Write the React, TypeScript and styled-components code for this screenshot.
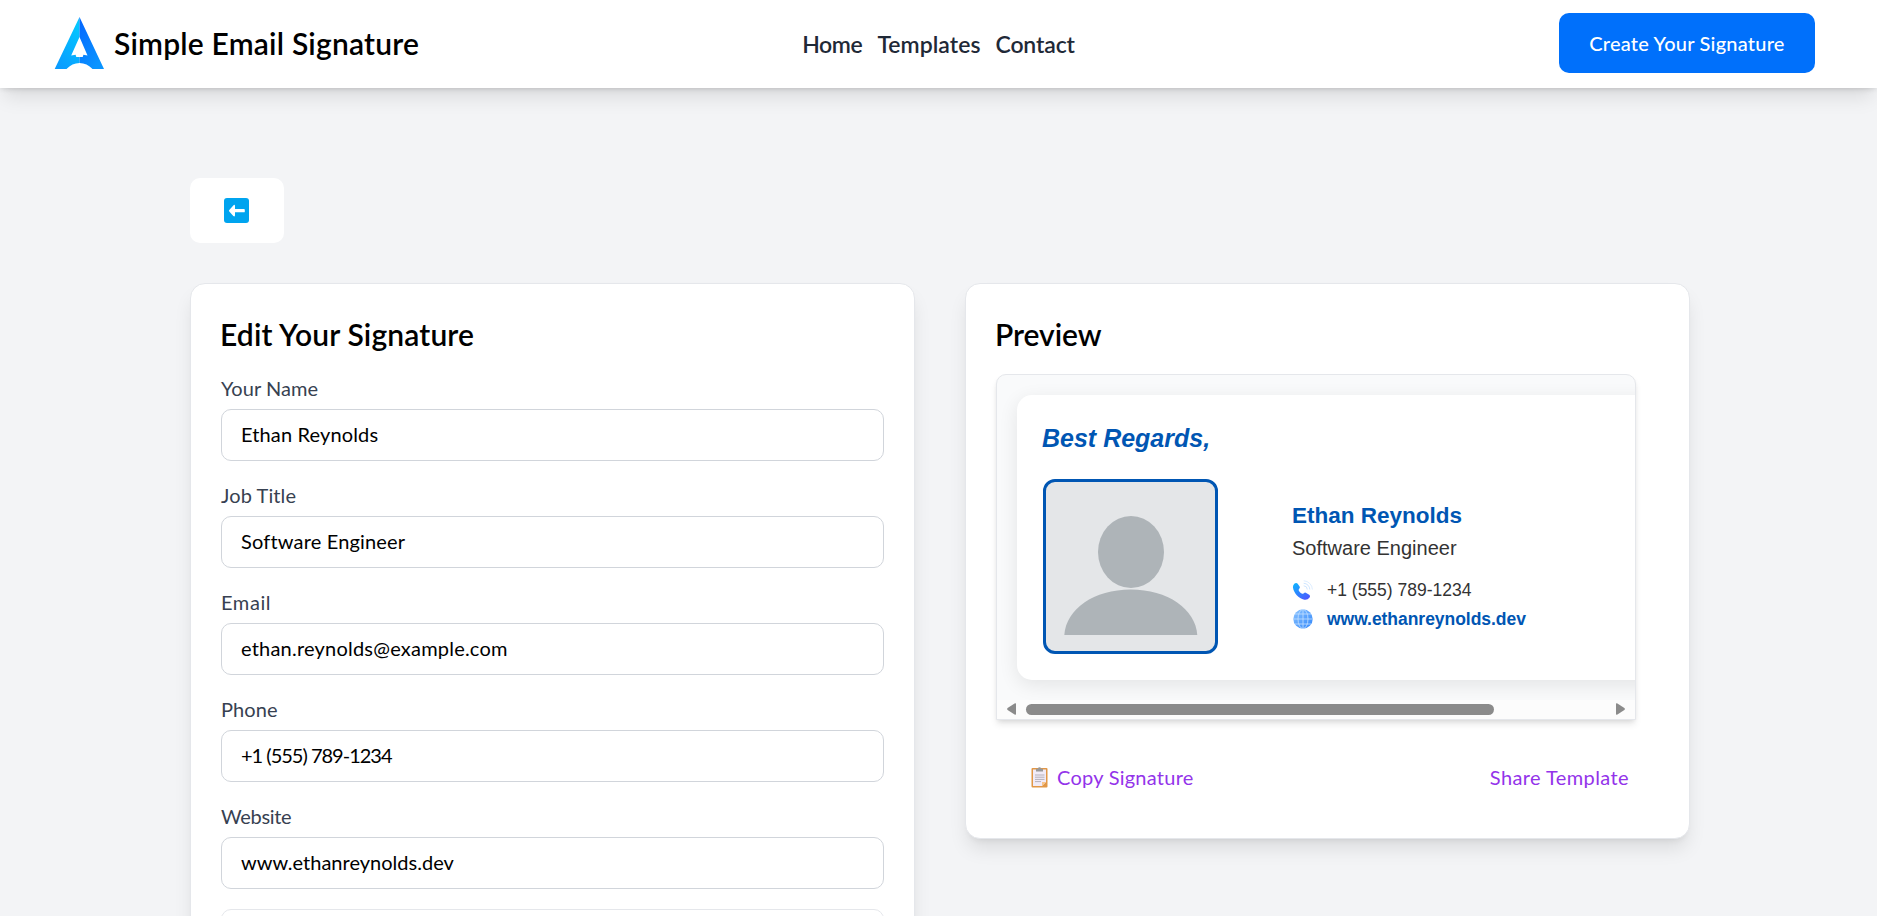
import React from 'react';
import styled, { createGlobalStyle } from 'styled-components';

const GlobalStyle = createGlobalStyle`
  *, *::before, *::after { box-sizing: border-box; }
  html, body { margin: 0; height: 916px; overflow: hidden; }
  body {
    background: #f3f4f6;
    color: #000;
    font-family: Lato, "Liberation Sans", sans-serif;
    font-size: 20px;
  }
`;

const Page = styled.div`
  height: 916px;
  overflow: hidden;
`;

const Header = styled.header`
  position: relative;
  display: grid;
  grid-template-columns: 1fr auto 1fr;
  align-items: center;
  height: 88px;
  padding: 0 62px 2px;
  background: #fff;
  box-shadow: 0 12.5px 18.75px -3.75px rgba(0, 0, 0, 0.1), 0 5px 7.5px -5px rgba(0, 0, 0, 0.1),
    0 1px 5px rgba(0, 0, 0, 0.08);
`;

const Brand = styled.a`
  display: flex;
  align-items: center;
  gap: 9px;
  margin-left: -8px;
  font-size: 30px;
  font-weight: 600;
  letter-spacing: 0.2px;
  line-height: 40px;
`;

const Nav = styled.nav`
  display: flex;
  gap: 15px;
  padding-top: 2px;
`;

const NavLink = styled.a<{ $tracking: number }>`
  color: #1f2937;
  font-size: 23px;
  font-weight: 600;
  line-height: 30px;
  letter-spacing: ${(p) => p.$tracking}px;
`;

const PrimaryButton = styled.button`
  justify-self: end;
  width: 256px;
  height: 60px;
  padding: 0;
  border: 0;
  border-radius: 10px;
  background: #0070fb;
  color: #fff;
  font: 500 20px Lato, sans-serif;
  letter-spacing: 0.22px;
`;

const Main = styled.main`
  padding: 90px 0 0 190px;
`;

const BackButton = styled.button`
  display: flex;
  align-items: center;
  justify-content: center;
  width: 94px;
  height: 65px;
  padding: 0 1px 1px 0;
  border: 0;
  border-radius: 10px;
  background: #fff;
`;

const Columns = styled.div`
  display: grid;
  grid-template-columns: 725px 725px;
  gap: 50px;
  align-items: start;
  margin-top: 40px;
`;

const Card = styled.section`
  padding: 30px;
  border: 1px solid #e5e7eb;
  border-radius: 15px;
  background: #fff;
  box-shadow: 0 12.5px 18.75px -3.75px rgba(0, 0, 0, 0.1), 0 5px 7.5px -5px rgba(0, 0, 0, 0.1);
`;

const CardTitle = styled.h2<{ $tracking?: number }>`
  margin: 0 0 20px;
  margin-left: -1px;
  font-size: 30px;
  font-weight: 600;
  line-height: 40px;
  letter-spacing: ${(p) => p.$tracking ?? 0}px;
`;

const Field = styled.div`
  margin-bottom: 20px;
`;

const Label = styled.label<{ $tracking: number }>`
  display: block;
  padding-bottom: 7px;
  color: #374151;
  line-height: 28px;
  letter-spacing: ${(p) => p.$tracking}px;
`;

const Input = styled.input<{ $tracking: number }>`
  display: block;
  width: 663px;
  height: 52px;
  padding: 0 19px 2px;
  border: 1px solid #d1d5db;
  border-radius: 10px;
  background: #fff;
  color: #000;
  font: 400 20px Lato, sans-serif;
  letter-spacing: ${(p) => p.$tracking}px;
  outline: 0;
`;

const Uploader = styled.div`
  width: 663px;
  height: 120px;
  border: 1px solid #e5e7eb;
  border-radius: 10px;
`;

const PreviewFrame = styled.div`
  width: 640px;
  height: 346px;
  border: 1px solid #e5e7eb;
  border-radius: 10px 10px 0 0;
  background: #f9fafb;
  box-shadow: 0 5px 7.5px -1.25px rgba(0, 0, 0, 0.1), 0 2.5px 5px -2.5px rgba(0, 0, 0, 0.1);
`;

const Viewport = styled.div`
  height: 325px;
  padding: 20px;
  overflow: hidden;
  border-radius: 9px 9px 0 0;
`;

const SignatureCard = styled.div`
  width: 780px;
  height: 285px;
  padding: 26px 25px 25px;
  border-radius: 15px;
  background: #fff;
  box-shadow: 0 5px 19px rgba(0, 0, 0, 0.09);
  font-family: "Liberation Sans", Arial, sans-serif;
`;

const Closing = styled.div`
  margin-bottom: 23px;
  color: #0056b3;
  font-size: 25px;
  font-style: italic;
  font-weight: 700;
  line-height: 35px;
`;

const SignatureBody = styled.div`
  display: flex;
  gap: 74px;
  padding-left: 1px;
`;

const Avatar = styled.div`
  width: 175px;
  height: 175px;
  overflow: hidden;
  border: 3px solid #0056b3;
  border-radius: 12px;
  background: #e4e6e8;

  svg { display: block; }
`;

const Details = styled.div`
  padding-top: 22px;
`;

const PersonName = styled.div`
  margin-bottom: 2px;
  color: #0056b3;
  font-size: 22.5px;
  font-weight: 700;
  line-height: 30px;
`;

const PersonRole = styled.div`
  margin-bottom: 12px;
  color: #333;
  line-height: 30px;
`;

const ContactRow = styled.div<{ $link?: boolean }>`
  display: flex;
  align-items: center;
  gap: 14px;
  height: 29px;
  color: ${(p) => (p.$link ? '#0056b3' : '#333')};
  font-size: 17.5px;
  font-weight: ${(p) => (p.$link ? 700 : 400)};
  letter-spacing: ${(p) => (p.$link ? -0.04 : 0)}px;

  span { padding-top: 2px; }
`;

const Scrollbar = styled.div`
  display: flex;
  align-items: center;
  height: 19px;
  padding: 0 10px 1px;
  background: #fcfcfc;
`;

const ScrollTrack = styled.div`
  flex: 1;
  margin: 0 10px;
`;

const ScrollThumb = styled.div`
  width: 468px;
  height: 11px;
  border-radius: 6px;
  background: #8b8b8b;
`;

const Actions = styled.div`
  display: flex;
  justify-content: space-between;
  width: 640px;
  margin-top: 32px;
  padding: 10px 7px 16px 35px;
`;

const ActionButton = styled.button<{ $tracking: number }>`
  display: flex;
  align-items: center;
  gap: 9px;
  padding: 0;
  border: 0;
  background: none;
  color: #9333ea;
  font: 400 20px/30px Lato, sans-serif;
  letter-spacing: ${(p) => p.$tracking}px;
`;

const LogoMark = () => (
  <svg width="51" height="52" viewBox="0 0 51 52">
    <defs>
      <linearGradient id="logo-left-fill" x1="0.7" y1="0" x2="0.2" y2="1">
        <stop offset="0" stopColor="#04c8ff" />
        <stop offset="1" stopColor="#0a9bff" />
      </linearGradient>
      <linearGradient id="logo-right-fill" x1="0" y1="0" x2="0.6" y2="1">
        <stop offset="0" stopColor="#0464ff" />
        <stop offset="1" stopColor="#0a94ff" />
      </linearGradient>
    </defs>
    <path d="M25.500 0 0.700 52H12.500Q18 46 25.500 46V20Z" fill="url(#logo-left-fill)" />
    <path d="M25.500 0 50 52H38.500Q33 46 25.500 46V20Z" fill="url(#logo-right-fill)" />
    <path d="M25.500 20 17.200 38.500 21.600 37.800 22.300 40H28.700L29.400 37.800 33.500 38.500Z" fill="#fff" />
  </svg>
);

const BackIcon = () => (
  <svg width="25" height="25" viewBox="0 0 25 25">
    <rect width="25" height="25" rx="3" fill="#00a4ef" />
    <path d="M5.300 12 9.300 7.400Q11 6 11 8.200V11.100H20Q20.800 11.100 20.800 12V13.400Q20.800 14.300 20 14.300H11V17Q11 19.200 9.300 17.900L5.300 13.600Q4.500 12.800 5.300 12Z" fill="#fff" />
  </svg>
);

const PersonSilhouette = () => (
  <svg width="169" height="169" viewBox="0 0 169 169">
    <ellipse cx="85" cy="70" rx="33" ry="36" fill="#aeb4b8" />
    <path d="M18.300 153C20 127 48 107.500 84.800 107.500S149.500 127 151.300 153Z" fill="#aeb4b8" />
  </svg>
);

const PhoneIcon = () => (
  <svg width="21" height="20" viewBox="0 0 21 20">
    <defs>
      <linearGradient id="handset-fill" x1="0" y1="0" x2="0.7" y2="1">
        <stop offset="0" stopColor="#0bb8ff" />
        <stop offset="1" stopColor="#4a5cff" />
      </linearGradient>
    </defs>
    <path d="M2.300 3.800Q4.200 2.300 5.700 3.800L7.600 6.400Q8.300 7.500 7.200 8.800Q6.300 9.900 7 11Q8 12.800 9.600 13.600Q10.800 14.200 11.800 13.200Q13 12.200 14.200 12.900L17.200 14.800Q18.600 15.900 17.600 17.500Q15.500 20.300 12.300 19.700C6.500 18.500 1.800 12.800 1 7.800Q.7 5.300 2.300 3.800Z" fill="url(#handset-fill)" />
    <g fill="none" stroke="#cfe6ff" strokeWidth="1">
      <path d="M11.700 0.800A9 9 0 0 1 20.400 9.500" strokeOpacity="0.700" />
      <path d="M11.700 3.300A6.300 6.300 0 0 1 17.800 9.500" />
      <path d="M11.700 5.800A3.800 3.800 0 0 1 15.300 9.500" />
    </g>
  </svg>
);

const GlobeIcon = () => (
  <svg width="21" height="20" viewBox="0 0 21 20">
    <defs>
      <linearGradient id="globe-fill" x1="0" y1="0" x2="1" y2="1">
        <stop offset="0" stopColor="#8cc4ff" />
        <stop offset="1" stopColor="#2f86fb" />
      </linearGradient>
    </defs>
    <circle cx="11" cy="10" r="9.700" fill="url(#globe-fill)" />
    <g fill="none" stroke="#c3e0ff" strokeWidth="0.800">
      <path d="M11 .3V19.700M1.300 10H20.700M2.900 5H19.100M2.900 15H19.100" />
      <ellipse cx="11" cy="10" rx="5" ry="9.600" />
    </g>
  </svg>
);

const ClipboardIcon = () => (
  <svg width="17" height="21" viewBox="0 0 17 21">
    <rect x="0.500" y="1" width="16" height="19.500" rx="1" fill="#e19747" />
    <path d="M2 2.500H15V15L11 19H2Z" fill="#f1ebf7" />
    <path d="M15 15 11 19V15Z" fill="#f7c48a" />
    <path d="M5 1.700H7Q7 0.300 8.500 0.300T10 1.700H12V4.500H5Z" fill="#999" />
    <path d="M4 8H13.500M4 10.200H13.500M4 12.400H13.500M4 14.600H10" stroke="#b5b1ba" strokeWidth="1" />
  </svg>
);

const ArrowLeft = () => (
  <svg width="9" height="12" viewBox="0 0 9 12">
    <path d="M8 .3Q9 0 9 1V11Q9 12 8 11.700L.6 7Q-.4 6 .6 5Z" fill="#8b8b8b" />
  </svg>
);

const ArrowRight = () => (
  <svg width="9" height="12" viewBox="0 0 9 12">
    <path d="M1 .3Q0 0 0 1V11Q0 12 1 11.700L8.400 7Q9.400 6 8.400 5Z" fill="#8b8b8b" />
  </svg>
);

const navItems = [
  { label: 'Home', tracking: -0.4 },
  { label: 'Templates', tracking: 0.04 },
  { label: 'Contact', tracking: -0.15 },
];

const fields = [
  { id: 'name', label: 'Your Name', labelTracking: 0.06, value: 'Ethan Reynolds', tracking: 0.14 },
  { id: 'title', label: 'Job Title', labelTracking: 0.1, value: 'Software Engineer', tracking: 0.17 },
  { id: 'email', label: 'Email', labelTracking: 0.6, value: 'ethan.reynolds@example.com', tracking: 0.215 },
  { id: 'phone', label: 'Phone', labelTracking: 0.1, value: '+1 (555) 789-1234', tracking: -1 },
  { id: 'website', label: 'Website', labelTracking: -0.3, value: 'www.ethanreynolds.dev', tracking: 0.02 },
];

export default function App() {
  return (
    <Page>
      <GlobalStyle />
      <Header>
        <Brand>
          <LogoMark />
          Simple Email Signature
        </Brand>
        <Nav>
          {navItems.map((item) => (
            <NavLink key={item.label} $tracking={item.tracking}>{item.label}</NavLink>
          ))}
        </Nav>
        <PrimaryButton>Create Your Signature</PrimaryButton>
      </Header>
      <Main>
        <BackButton aria-label="Back"><BackIcon /></BackButton>
        <Columns>
          <Card>
            <CardTitle $tracking={0.15}>Edit Your Signature</CardTitle>
            {fields.map((f) => (
              <Field key={f.id}>
                <Label htmlFor={f.id} $tracking={f.labelTracking}>{f.label}</Label>
                <Input id={f.id} defaultValue={f.value} $tracking={f.tracking} />
              </Field>
            ))}
            <Uploader />
          </Card>
          <Card>
            <CardTitle $tracking={-0.05}>Preview</CardTitle>
            <PreviewFrame>
              <Viewport>
                <SignatureCard>
                  <Closing>Best Regards,</Closing>
                  <SignatureBody>
                    <Avatar><PersonSilhouette /></Avatar>
                    <Details>
                      <PersonName>Ethan Reynolds</PersonName>
                      <PersonRole>Software Engineer</PersonRole>
                      <ContactRow><PhoneIcon /><span>+1 (555) 789-1234</span></ContactRow>
                      <ContactRow $link><GlobeIcon /><span>www.ethanreynolds.dev</span></ContactRow>
                    </Details>
                  </SignatureBody>
                </SignatureCard>
              </Viewport>
              <Scrollbar>
                <ArrowLeft />
                <ScrollTrack><ScrollThumb /></ScrollTrack>
                <ArrowRight />
              </Scrollbar>
            </PreviewFrame>
            <Actions>
              <ActionButton $tracking={0.25}><ClipboardIcon />Copy Signature</ActionButton>
              <ActionButton $tracking={0.4}>Share Template</ActionButton>
            </Actions>
          </Card>
        </Columns>
      </Main>
    </Page>
  );
}
